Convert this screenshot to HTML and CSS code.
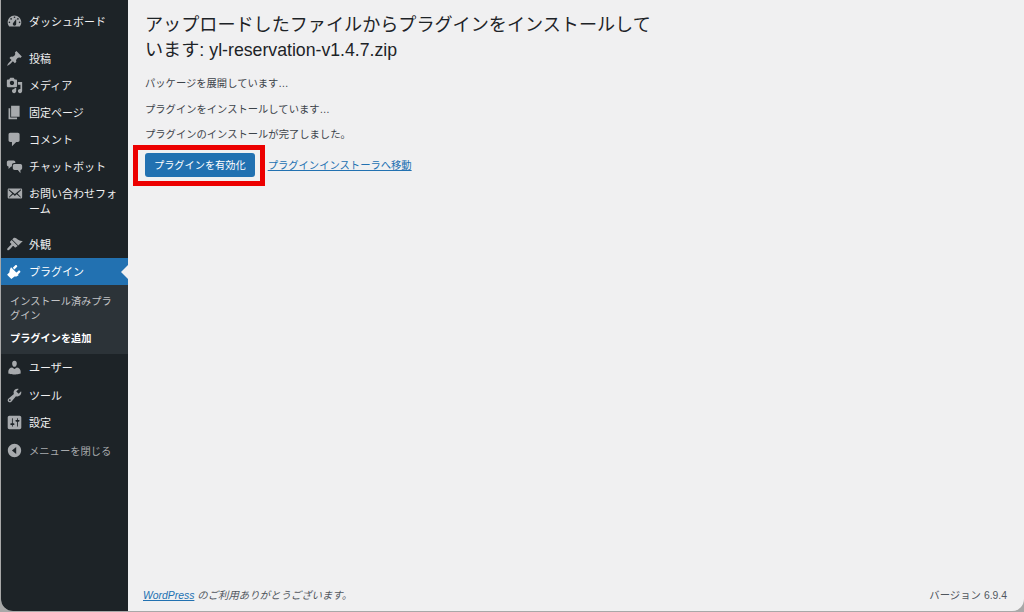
FILE: index.html
```html
<!DOCTYPE html>
<html lang="ja">
<head>
  <meta charset="UTF-8">
  <meta name="viewport" content="width=device-width, initial-scale=1.0">
  <title>プラグインのインストール</title>
  <link rel="stylesheet" href="styles.css">
</head>
<body>
  <div class="window">
    <aside class="sidebar">
      <ul class="menu">
        <li class="menu-item">
          <svg class="menu-icon" viewBox="0 0 20 20"><path fill-rule="evenodd" d="M3.76 16h12.48c1.1-1.37 1.76-3.11 1.76-5 0-4.42-3.58-8-8-8s-8 3.58-8 8c0 1.89.66 3.63 1.76 5zM10 4c.55 0 1 .45 1 1s-.45 1-1 1-1-.45-1-1 .45-1 1-1zM6 6c.55 0 1 .45 1 1s-.45 1-1 1-1-.45-1-1 .45-1 1-1zm8 0c.55 0 1 .45 1 1s-.45 1-1 1-1-.45-1-1 .45-1 1-1zm-5.37 5.55L12 7v6c0 1.1-.9 2-2 2s-2-.9-2-2c0-.57.25-1.09.63-1.45zM4 10c.55 0 1 .45 1 1s-.45 1-1 1-1-.45-1-1 .45-1 1-1zm12 0c.55 0 1 .45 1 1s-.45 1-1 1-1-.45-1-1 .45-1 1-1z"/></svg>
          <span>ダッシュボード</span>
        </li>
        <li class="menu-item menu-gap">
          <svg class="menu-icon" viewBox="0 0 20 20"><path d="M10.44 3.02l1.82-1.82 6.36 6.35-1.83 1.82c-1.05-.68-2.48-.57-3.41.36l-.75.75c-.92.93-1.04 2.35-.35 3.41l-1.83 1.82-2.41-2.41-2.8 2.79c-.42.42-3.38 2.71-3.8 2.29s1.86-3.39 2.28-3.81l2.79-2.79L4.1 9.36l1.83-1.82c1.05.69 2.48.57 3.4-.36l.75-.75c.93-.92 1.05-2.35.36-3.41z"/></svg>
          <span>投稿</span>
        </li>
        <li class="menu-item">
          <svg class="menu-icon" viewBox="0 0 20 20"><path fill-rule="evenodd" d="M13 11V4c0-.55-.45-1-1-1h-1.67L9 1H5L3.67 3H2c-.55 0-1 .45-1 1v7c0 .55.45 1 1 1h10c.55 0 1-.45 1-1zM7 4.5c1.38 0 2.5 1.12 2.5 2.5S8.38 9.500 7 9.500 4.500 8.380 4.500 7 5.620 4.500 7 4.500zM14 6h5v10.500c0 1.380-1.120 2.500-2.500 2.500S14 17.880 14 16.500s1.120-2.500 2.500-2.500c.17 0 .34.020.5.050V9h-3V6zm-4 8.050V13h2v3.500c0 1.380-1.120 2.500-2.500 2.500S7 17.880 7 16.500 8.120 14 9.500 14c.17 0 .34.020.5.050z"/></svg>
          <span>メディア</span>
        </li>
        <li class="menu-item">
          <svg class="menu-icon" viewBox="0 0 20 20"><path d="M6 15V2h10v13H6zm-1 1h8v2H3V5h2v11z"/></svg>
          <span>固定ページ</span>
        </li>
        <li class="menu-item">
          <svg class="menu-icon" viewBox="0 0 20 20"><path d="M5 2h9c1.1 0 2 .9 2 2v7c0 1.1-.9 2-2 2h-2l-5 5v-5H5c-1.100 0-2-.9-2-2V4c0-1.100.9-2 2-2z"/></svg>
          <span>コメント</span>
        </li>
        <li class="menu-item">
          <svg class="menu-icon" viewBox="0 0 20 20"><path d="M3 3h6c1 0 2 1 2 2v1H9.500C8 6 7 7 7 8.500V10H6l-3 3v-3c-1 0-2-1-2-2V5c0-1 1-2 2-2zM10 7h7c1 0 2 1 2 2v3c0 1-1 2-2 2v4l-3-4h-4c-1 0-2-1-2-2V9c0-1 1-2 2-2z"/></svg>
          <span>チャットボット</span>
        </li>
        <li class="menu-item">
          <svg class="menu-icon" viewBox="0 0 20 20"><path fill-rule="evenodd" d="M19 14.500v-9c0-.83-.67-1.500-1.500-1.500H3.490c-.83 0-1.500.67-1.500 1.500v9c0 .83.67 1.500 1.500 1.500H17.500c.83 0 1.500-.67 1.500-1.500zm-1.310-9.110c.33.33.15.67-.03.84L13.600 9.950l3.900 4.060c.12.14.2.38.05.54-.14.17-.46.16-.58.05l-4.370-3.730-2.140 1.950-2.130-1.950-4.370 3.730c-.12.11-.44.12-.58-.05-.15-.16-.07-.4.05-.54l3.900-4.060-4.060-3.720c-.18-.17-.36-.51-.03-.84s.67-.17.95.07l6.240 5.040 6.250-5.040c.28-.24.62-.4.95-.07z"/></svg>
          <span>お問い合わせフォーム</span>
        </li>
        <li class="menu-item menu-gap-small">
          <svg class="menu-icon" viewBox="0 0 20 20"><path d="M14.480 11.060L7.410 3.990l1.500-1.500c.5-.56 2.300-.47 3.510.32 1.210.8 1.430 1.280 2.910 2.100 1.180.64 2.450 1.260 4.450.85zm-.71.71L6.700 4.700 4.930 6.470c-.39.39-.39 1.020 0 1.410l1.060 1.060c.39.39.39 1.030 0 1.420-.6.6-1.430 1.270-2.210 2.050-2.060 2.060-3.020 3.130-2.110 4.010.9.880 1.950-.05 4.010-2.110.78-.78 1.450-1.620 2.050-2.210.39-.39 1.030-.39 1.420 0l1.060 1.060c.39.39 1.020.39 1.410 0z"/></svg>
          <span>外観</span>
        </li>
        <li class="menu-item menu-current">
          <svg class="menu-icon" viewBox="0 0 20 20"><path d="M13.110 4.360L9.870 7.600 8 5.730l3.240-3.240c.35-.34 1.050-.2 1.560.32.52.51.66 1.210.31 1.550zm-8 1.770l.91-1.120 9.010 9.010-1.190.84c-.71.71-2.630 1.160-3.820 1L6.250 18.700l-4.950-4.950 2.810-2.810c-.16-1.190.29-3.110 1-3.810zm11.650 4.670l-3.240 3.240-1.870-1.870 3.240-3.240c.34-.35 1.040-.21 1.550.31.52.51.66 1.210.32 1.560z"/></svg>
          <span>プラグイン</span>
        </li>
        <li class="submenu">
          <a class="submenu-link">インストール済みプラグイン</a>
          <a class="submenu-link submenu-current">プラグインを追加</a>
        </li>
        <li class="menu-item">
          <svg class="menu-icon" viewBox="0 0 20 20"><path d="M10 9.250c-2.270 0-2.730-3.440-2.730-3.440C7 4.020 7.820 2 9.970 2c2.160 0 2.980 2.020 2.710 3.810 0 0-.41 3.440-2.680 3.440zm0 2.570L12.720 10c2.390 0 4.520 2.330 4.520 4.530v2.490s-3.650 1.130-7.240 1.130c-3.650 0-7.240-1.130-7.240-1.130v-2.490c0-2.250 1.940-4.480 4.470-4.480z"/></svg>
          <span>ユーザー</span>
        </li>
        <li class="menu-item">
          <svg class="menu-icon" viewBox="0 0 20 20"><path fill-rule="evenodd" d="M16.680 9.770c-1.340 1.340-3.300 1.670-4.950.99l-5.410 6.520c-.99.99-2.590.99-3.580 0s-.99-2.590 0-3.570l6.520-5.420c-.68-1.650-.35-3.610.99-4.950 1.280-1.280 3.120-1.620 4.720-1.060l-2.890 2.890 2.820 2.820 2.860-2.870c.53 1.580.18 3.400-1.080 4.670zM3.810 16.210c.4.39 1.030.39 1.420 0 .4-.4.4-1.030 0-1.430-.39-.39-1.020-.39-1.420 0a1.020 1.020 0 0 0 0 1.430z"/></svg>
          <span>ツール</span>
        </li>
        <li class="menu-item">
          <svg class="menu-icon" viewBox="0 0 20 20"><path fill-rule="evenodd" d="M18 16V4c0-1.100-.9-2-2-2H4c-1.100 0-2 .9-2 2v12c0 1.100.9 2 2 2h12c1.100 0 2-.9 2-2zM8 11h1c.55 0 1 .45 1 1s-.45 1-1 1H8v1.500c0 .28-.22.5-.5.5s-.5-.22-.5-.5V13H6c-.55 0-1-.45-1-1s.45-1 1-1h1V5.500c0-.28.22-.5.5-.5s.5.22.5.5V11zm5-2h-1c-.55 0-1-.45-1-1s.45-1 1-1h1V5.500c0-.28.22-.5.5-.5s.5.22.5.5V7h1c.55 0 1 .45 1 1s-.45 1-1 1h-1v5.500c0 .28-.22.5-.5.5s-.5-.22-.5-.5V9z"/></svg>
          <span>設定</span>
        </li>
        <li class="menu-item menu-collapse">
          <svg class="menu-icon" viewBox="0 0 20 20"><path fill-rule="evenodd" d="M10 2.160c4.330 0 7.840 3.510 7.840 7.840s-3.510 7.840-7.840 7.840S2.160 14.330 2.160 10 5.670 2.160 10 2.160zM12 14V6l-5 4z"/></svg>
          <span>メニューを閉じる</span>
        </li>
      </ul>
    </aside>

    <div class="content">
      <main class="main">
        <h1 class="page-title">アップロードしたファイルからプラグインをインストールしています: <span class="filename">yl-reservation-v1.4.7.zip</span></h1>
        <p class="log-line">パッケージを展開しています…</p>
        <p class="log-line">プラグインをインストールしています…</p>
        <p class="log-line">プラグインのインストールが完了しました。</p>
        <div class="actions">
          <a class="button">プラグインを有効化</a>
          <a class="link">プラグインインストーラへ移動</a>
        </div>
      </main>
      <footer class="footer">
        <span class="thanks"><a class="link">WordPress</a> のご利用ありがとうございます。</span>
        <span class="version">バージョン 6.9.4</span>
      </footer>
    </div>
  </div>
</body>
</html>
```

FILE: styles.css
```css
* {
  box-sizing: border-box;
}

html, body {
  height: 100%;
}

body {
  margin: 0;
  padding: 0 0 1px 1px;
  background-color: #a8a8a8;
  color: #3c434a;
  font-family: "Liberation Sans", "Noto Sans CJK JP", sans-serif;
  font-size: 10.3px;
}

.window {
  display: flex;
  height: 611px;
  border-radius: 0 0 12px 12px;
  overflow: hidden;
  background-color: #f0f0f1;
}

/* sidebar */
.sidebar {
  width: 127px;
  flex-shrink: 0;
  background-color: #1d2327;
  color: #f0f0f1;
}

.menu {
  list-style: none;
  margin: 0;
  padding: 8px 0 0;
}

.menu-item {
  position: relative;
  display: flex;
  align-items: flex-start;
  gap: 6px;
  padding: 7px 8px 5px 5px;
  font-size: 11px;
  line-height: 15px;
}

.menu-icon {
  width: 17px;
  height: 17px;
  flex-shrink: 0;
  margin: -2px 0 -1px;
  fill: #a7aaad;
}

.menu-gap {
  margin-top: 10px;
}

.menu-gap-small {
  margin-top: 9px;
}

.menu-current {
  background-color: #2271b1;
  color: #fff;
}

.menu-current .menu-icon {
  fill: #fff;
}

.menu-current::after {
  content: "";
  position: absolute;
  right: 0;
  top: 7px;
  border: 7px solid transparent;
  border-right-color: #f0f0f1;
  border-left-width: 0;
}

.submenu ~ .menu-item + .menu-item {
  margin-top: 0.5px;
}

.menu-collapse {
  font-size: 10.3px;
  color: #a7aaad;
}

.submenu {
  display: flex;
  flex-direction: column;
  gap: 9px;
  padding: 10px 10px 8px 9px;
  background-color: #2c3338;
  font-size: 10.2px;
  line-height: 14px;
  color: #c3c4c7;
}

.submenu-current {
  color: #fff;
  font-weight: 700;
}

/* main column */
.content {
  flex: 1;
  display: flex;
  flex-direction: column;
  min-width: 0;
}

.main {
  flex: 1;
  padding: 13px 16px 0 17px;
}

.page-title {
  width: 520px;
  margin: 0 0 13px;
  font-size: 18.1px;
  font-weight: 400;
  line-height: 25px;
  color: #1d2327;
}

.filename {
  font-size: 17.7px;
}

.log-line {
  margin: 0 0 10.5px;
  line-height: 15px;
}

.actions {
  display: flex;
  align-items: center;
  gap: 13px;
  margin-top: 11px;
}

.button {
  position: relative;
  display: inline-block;
  padding: 5.5px 9px 4.5px;
  border-radius: 3px;
  background-color: #2271b1;
  color: #fff;
  font-size: 10.2px;
  line-height: 14px;
}

/* red highlight drawn over the screenshot */
.button::after {
  content: "";
  position: absolute;
  inset: -8px -10px -9px -12px;
  border: 5px solid #ec0000;
}

.link {
  color: #2271b1;
  text-decoration: underline;
}

.actions .link {
  margin-bottom: 2px;
}

.footer {
  display: flex;
  justify-content: space-between;
  align-items: center;
  padding: 0 17px 8px 15px;
  font-size: 10.4px;
  line-height: 15px;
  color: #50575e;
}

.thanks {
  font-style: italic;
}
```
